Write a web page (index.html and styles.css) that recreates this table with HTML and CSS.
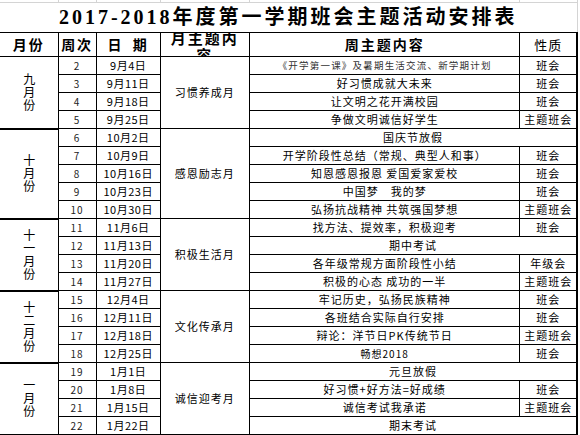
FILE: index.html
```html
<!DOCTYPE html>
<html lang="zh-CN">
<head>
<meta charset="utf-8">
<title>2017-2018年度第一学期班会主题活动安排表</title>
<link rel="stylesheet" href="styles.css">
</head>
<body>
<table class="sheet">
  <colgroup>
    <col class="c-month"><col class="c-week"><col class="c-date"><col class="c-mtheme"><col class="c-wtheme"><col class="c-type">
  </colgroup>
  <tr class="grid-strip"><td></td><td></td><td></td><td></td><td></td><td></td></tr>
  <tr class="title-row"><td colspan="6" class="title">2017-2018年度第一学期班会主题活动安排表</td></tr>
  <tr class="head">
    <td class="h-month">月份</td>
    <td>周次</td>
    <td class="h-date">日 期</td>
    <td class="h-clip"><div class="clip"><div class="clip-in">月主题内容</div></div></td>
    <td>周主题内容</td>
    <td class="h-type">性质</td>
  </tr>

  <tr>
    <td rowspan="4" class="month sep"><span class="vt">九月份</span></td>
    <td class="wk">2</td><td class="dt">9月4日</td>
    <td rowspan="4" class="mt">习惯养成月</td>
    <td class="small">《开学第一课》及暑期生活交流、新学期计划</td><td class="ty">班会</td>
  </tr>
  <tr><td class="wk">3</td><td class="dt">9月11日</td><td>好习惯成就大未来</td><td class="ty">班会</td></tr>
  <tr><td class="wk">4</td><td class="dt">9月18日</td><td>让文明之花开满校园</td><td class="ty">班会</td></tr>
  <tr><td class="wk">5</td><td class="dt">9月25日</td><td>争做文明诚信好学生</td><td class="ty">主题班会</td></tr>

  <tr>
    <td rowspan="5" class="month sep"><span class="vt">十月份</span></td>
    <td class="wk">6</td><td class="dt">10月2日</td>
    <td rowspan="5" class="mt">感恩励志月</td>
    <td colspan="2" class="span">国庆节放假</td>
  </tr>
  <tr><td class="wk">7</td><td class="dt">10月9日</td><td>开学阶段性总结（常规、典型人和事）</td><td class="ty">班会</td></tr>
  <tr><td class="wk">8</td><td class="dt">10月16日</td><td>知恩感恩报恩 爱国爱家爱校</td><td class="ty">班会</td></tr>
  <tr><td class="wk">9</td><td class="dt">10月23日</td><td>中国梦　我的梦</td><td class="ty">班会</td></tr>
  <tr><td class="wk">10</td><td class="dt">10月30日</td><td>弘扬抗战精神 共筑强国梦想</td><td class="ty">主题班会</td></tr>

  <tr>
    <td rowspan="4" class="month sep"><span class="vt">十一月份</span></td>
    <td class="wk">11</td><td class="dt">11月6日</td>
    <td rowspan="4" class="mt">积极生活月</td>
    <td>找方法、提效率，积极迎考</td><td class="ty">班会</td>
  </tr>
  <tr><td class="wk">12</td><td class="dt">11月13日</td><td colspan="2" class="span">期中考试</td></tr>
  <tr><td class="wk">13</td><td class="dt">11月20日</td><td>各年级常规方面阶段性小结</td><td class="ty">年级会</td></tr>
  <tr><td class="wk">14</td><td class="dt">11月27日</td><td>积极的心态 成功的一半</td><td class="ty">主题班会</td></tr>

  <tr>
    <td rowspan="4" class="month sep"><span class="vt">十二月份</span></td>
    <td class="wk">15</td><td class="dt">12月4日</td>
    <td rowspan="4" class="mt">文化传承月</td>
    <td>牢记历史，弘扬民族精神</td><td class="ty">班会</td>
  </tr>
  <tr><td class="wk">16</td><td class="dt">12月11日</td><td>各班结合实际自行安排</td><td class="ty">班会</td></tr>
  <tr><td class="wk">17</td><td class="dt">12月18日</td><td>辩论：洋节日PK传统节日</td><td class="ty">主题班会</td></tr>
  <tr><td class="wk">18</td><td class="dt">12月25日</td><td class="smallish">畅想2018</td><td class="ty">班会</td></tr>

  <tr>
    <td rowspan="4" class="month"><span class="vt">一月份</span></td>
    <td class="wk">19</td><td class="dt">1月1日</td>
    <td rowspan="4" class="mt">诚信迎考月</td>
    <td colspan="2" class="span">元旦放假</td>
  </tr>
  <tr><td class="wk">20</td><td class="dt">1月8日</td><td>好习惯+好方法=好成绩</td><td class="ty">班会</td></tr>
  <tr><td class="wk">21</td><td class="dt">1月15日</td><td>诚信考试我承诺</td><td class="ty">主题班会</td></tr>
  <tr><td class="wk">22</td><td class="dt">1月22日</td><td colspan="2" class="span">期末考试</td></tr>
</table>
</body>
</html>
```

FILE: styles.css
```css
html, body {
  margin: 0;
  padding: 0;
  background: #ffffff;
}

body {
  font-family: "Noto Sans CJK SC", "Liberation Sans", sans-serif;
  color: #000;
  overflow: hidden;
}

.sheet {
  border-collapse: collapse;
  table-layout: fixed;
  width: 578px;
}

.c-month { width: 58px; }
.c-week { width: 38px; }
.c-date { width: 64px; }
.c-mtheme { width: 89px; }
.c-wtheme { width: 270px; }
.c-type { width: 57px; }

.sheet td {
  padding: 0;
  text-align: center;
  vertical-align: middle;
  white-space: nowrap;
  border: 1px solid #000;
  font-size: 11px;
  letter-spacing: 1px;
  line-height: 17px;
  height: 17px;
}

.sheet tr > td:first-child {
  border-left: none;
}

.sheet td.ty,
.sheet td.span {
  border-right: 2px solid #000;
}

/* faint spreadsheet grid above the title */
.sheet .grid-strip td {
  height: 2px;
  line-height: 2px;
  border: none;
  border-right: 1px solid #d4d4d4;
  border-bottom: 1px solid #d4d4d4;
}

.sheet .title-row td.title {
  height: 29px;
  border: none;
  border-right: 1px solid #d4d4d4;
  font-family: "Liberation Serif", "Noto Sans CJK SC", serif;
  font-weight: bold;
  font-size: 20px;
  letter-spacing: 3px;
  line-height: 29px;
}

.sheet .head td {
  height: 23px;
  font-size: 14px;
  font-weight: bold;
  letter-spacing: 2px;
  line-height: 23px;
}

.sheet .head td.h-date {
  word-spacing: 4px;
}

.sheet .head td.h-type {
  font-weight: normal;
  font-size: 13px;
  letter-spacing: 1px;
  border-right: 2px solid #000;
}

.sheet .head td.h-clip {
  vertical-align: top;
}

.clip {
  height: 23px;
  overflow: hidden;
}

.clip-in {
  width: 72px;
  margin: -4px auto 0;
  white-space: normal;
  font-size: 15px;
  line-height: 17px;
}

.sheet td.month {
  font-size: 12px;
  letter-spacing: 0;
}

.sheet td.sep {
  border-bottom: 2px solid #000;
}

.vt {
  display: inline-block;
  writing-mode: vertical-rl;
  text-orientation: upright;
  letter-spacing: 1px;
  line-height: 14px;
  vertical-align: middle;
}

.sheet td.wk {
  font-size: 10px;
  color: #222;
}

.sheet td.dt {
  font-size: 11px;
  letter-spacing: 0.5px;
}

.sheet td.mt {
  font-size: 11px;
  letter-spacing: 1px;
}

.sheet td.small {
  font-size: 9.5px;
  letter-spacing: 1.2px;
  color: #333;
}

.sheet td.smallish {
  font-size: 10px;
}

.sheet td.ty {
  font-size: 11px;
  letter-spacing: 1px;
}
```
